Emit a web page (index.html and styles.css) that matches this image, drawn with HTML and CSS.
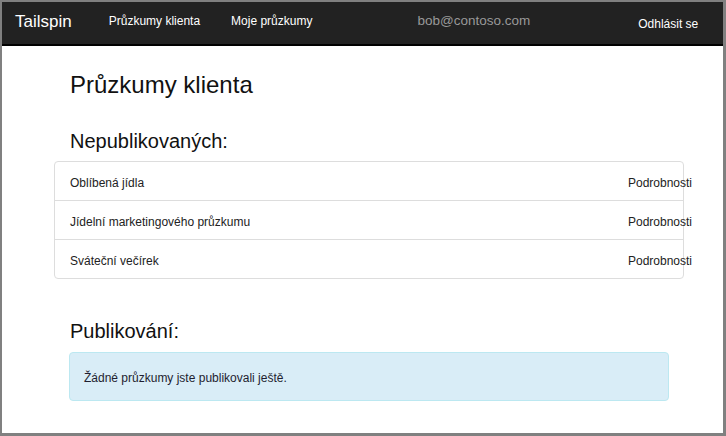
FILE: index.html
```html
<!DOCTYPE html>
<html lang="cs">
<head>
<meta charset="utf-8">
<title>Tailspin – Průzkumy klienta</title>
<link rel="stylesheet" href="styles.css">
</head>
<body>
<div class="frame">
  <nav class="navbar">
    <span class="brand">Tailspin</span>
    <a class="nav-link first">Průzkumy klienta</a>
    <a class="nav-link second">Moje průzkumy</a>
    <span class="email">bob@contoso.com</span>
    <a class="logout">Odhlásit se</a>
  </nav>
  <main class="container">
    <h1 class="title">Průzkumy klienta</h1>
    <h3 class="section-title">Nepublikovaných:</h3>
    <ul class="list-group">
      <li class="list-item"><span class="item-name">Oblíbená jídla</span><a class="item-link">Podrobnosti</a></li>
      <li class="list-item"><span class="item-name">Jídelní marketingového průzkumu</span><a class="item-link">Podrobnosti</a></li>
      <li class="list-item"><span class="item-name">Sváteční večírek</span><a class="item-link">Podrobnosti</a></li>
    </ul>
    <h3 class="section-title published">Publikování:</h3>
    <div class="alert">Žádné průzkumy jste publikovali ještě.</div>
  </main>
</div>
</body>
</html>
```
FILE: styles.css
```css
html, body {
  margin: 0;
  padding: 0;
  background: #fff;
}

.frame {
  box-sizing: border-box;
  width: 726px;
  height: 436px;
  border-style: solid;
  border-color: #808080;
  border-width: 2px 3px 3px 2px;
  background: #fff;
  font-family: "Liberation Sans", Arial, sans-serif;
  color: #111;
  overflow: hidden;
}

.navbar {
  display: flex;
  align-items: flex-start;
  height: 42px;
  background: #222;
  border-bottom: 2px solid #000;
}

.brand {
  margin: 10px 0 0 13px;
  font-size: 17px;
  line-height: 20px;
  color: #fff;
}

.nav-link {
  margin-top: 11px;
  font-size: 12px;
  line-height: 16px;
  color: #fff;
  cursor: pointer;
}

.nav-link.first {
  margin-left: 37px;
}

.nav-link.second {
  margin-left: 31px;
}

.email {
  margin: 10px 0 0 105px;
  font-size: 13.5px;
  line-height: 18px;
  color: #999;
}

.logout {
  margin: 14px 0 0 108px;
  font-size: 12px;
  line-height: 16px;
  color: #fff;
  cursor: pointer;
}

.container {
  width: 600px;
  margin-left: 67px;
  padding-top: 25px;
}

.title {
  margin: 0 0 0 1px;
  font-size: 24px;
  line-height: 28px;
  font-weight: normal;
  color: #111;
}

.section-title {
  margin: 30px 0 0 1px;
  font-size: 20px;
  line-height: 24px;
  font-weight: normal;
  color: #111;
}

.section-title.published {
  margin-top: 40px;
}

.list-group {
  list-style: none;
  margin: 8px -15px 0;
  padding: 0;
  border: 1px solid #ddd;
  border-radius: 4px;
}

.list-item {
  display: flex;
  justify-content: space-between;
  padding: 13px 15px 9px;
  font-size: 12px;
  line-height: 16px;
  color: #222;
}

.list-item + .list-item {
  border-top: 1px solid #ddd;
}

.item-link {
  margin-right: -24px;
  color: #222;
  cursor: pointer;
  white-space: nowrap;
}

.alert {
  margin-top: 9px;
  padding: 17px 14px 14px;
  font-size: 12px;
  line-height: 16px;
  color: #1e1e30;
  background: #d9edf7;
  border: 1px solid #bce8f1;
  border-radius: 4px;
}
```
